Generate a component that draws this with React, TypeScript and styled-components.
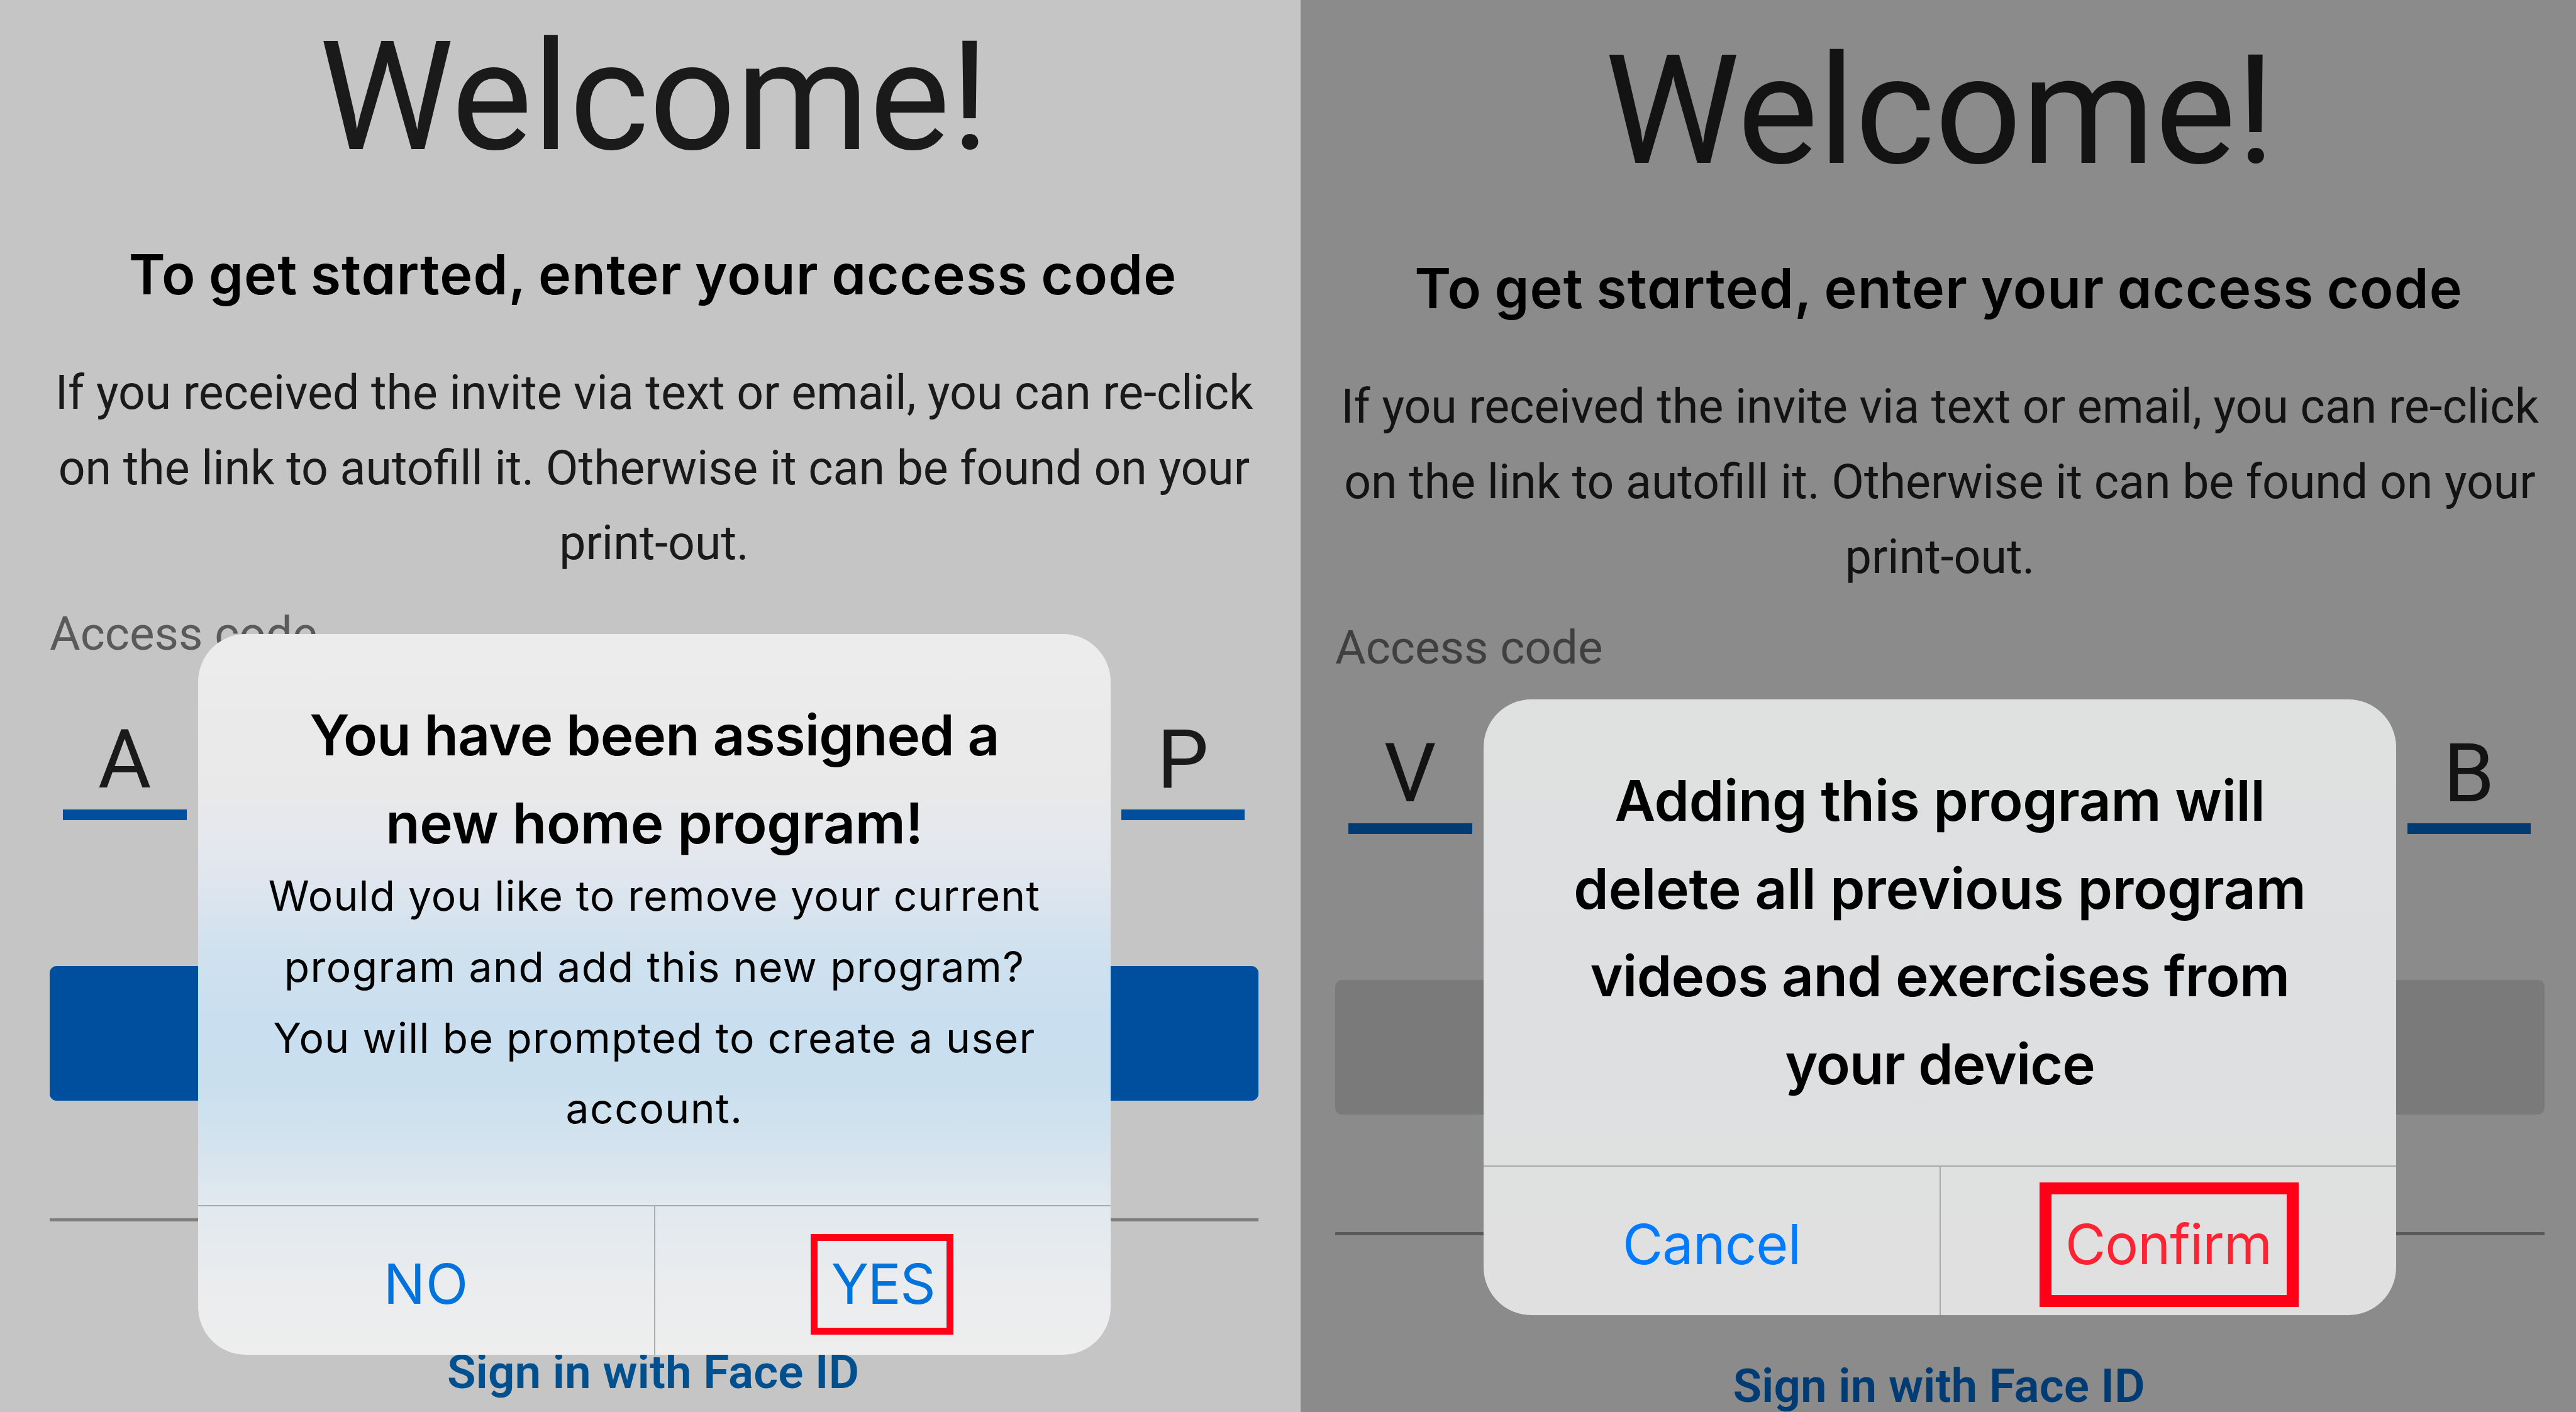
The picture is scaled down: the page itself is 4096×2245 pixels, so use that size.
import { createGlobalStyle, styled } from 'styled-components';

interface AlertLine {
  text: string;
  tracking: number;
}

interface ScreenProps {
  dimmed?: boolean;
  firstLetter: string;
  lastLetter: string;
  children: React.ReactNode;
}

const ASSIGNED_TITLE: AlertLine[] = [
  { text: 'You have been assigned a', tracking: -0.86 },
  { text: 'new home program!', tracking: -0.3 },
];

const ASSIGNED_MESSAGE: AlertLine[] = [
  { text: 'Would you like to remove your current', tracking: 1.13 },
  { text: 'program and add this new program?', tracking: 1.43 },
  { text: 'You will be prompted to create a user', tracking: 1.34 },
  { text: 'account.', tracking: 1.4 },
];

const DELETE_TITLE: AlertLine[] = [
  { text: 'Adding this program will', tracking: -0.36 },
  { text: 'delete all previous program', tracking: -0.2 },
  { text: 'videos and exercises from', tracking: -0.66 },
  { text: 'your device', tracking: -1 },
];

const WelcomeScreen = ({ dimmed = false, firstLetter, lastLetter, children }: ScreenProps) => (
  <Screen $dimmed={dimmed}>
    <Welcome>Welcome!</Welcome>
    <Heading>To get started, enter your access code</Heading>
    <Description>
      If you received the invite via text or email, you can re-click
      <br />
      on the link to autofill it. Otherwise it can be found on your
      <br />
      print-out.
    </Description>
    <CodeLabel $dimmed={dimmed}>Access code</CodeLabel>
    <CodeRow>
      <CodeCell $dimmed={dimmed}>{firstLetter}</CodeCell>
      <CodeCell $dimmed={dimmed}>{lastLetter}</CodeCell>
    </CodeRow>
    <SubmitButton $dimmed={dimmed} />
    <Divider $dimmed={dimmed} />
    <FaceIdLink $dimmed={dimmed}>Sign in with Face ID</FaceIdLink>
    {children}
  </Screen>
);

const App = () => {
  return (
    <Container>
      <GlobalStyle />
      <WelcomeScreen firstLetter="A" lastLetter="P">
        <AssignedAlert>
          <AlertBody>
            <AlertTitle>
              {ASSIGNED_TITLE.map(({ text, tracking }) => (
                <TextLine key={text} $tracking={tracking}>
                  {text}
                </TextLine>
              ))}
            </AlertTitle>
            <AlertMessage>
              {ASSIGNED_MESSAGE.map(({ text, tracking }) => (
                <TextLine key={text} $tracking={tracking}>
                  {text}
                </TextLine>
              ))}
            </AlertMessage>
          </AlertBody>
          <AlertActions $line="#a3adb3">
            <AlertButton $color="#0073dc" $tracking={1}>
              NO
            </AlertButton>
            <AlertButton $color="#0073dc" $tracking={-1.4}>
              YES
              <YesHighlight />
            </AlertButton>
          </AlertActions>
        </AssignedAlert>
      </WelcomeScreen>
      <WelcomeScreen dimmed firstLetter="V" lastLetter="B">
        <DeleteAlert>
          <AlertBody>
            <AlertTitle>
              {DELETE_TITLE.map(({ text, tracking }) => (
                <TextLine key={text} $tracking={tracking}>
                  {text}
                </TextLine>
              ))}
            </AlertTitle>
          </AlertBody>
          <AlertActions $line="#a9a9aa">
            <AlertButton $color="#007aff" $tracking={-0.9}>
              Cancel
            </AlertButton>
            <AlertButton $color="#ff2233" $tracking={-0.9}>
              Confirm
              <ConfirmHighlight />
            </AlertButton>
          </AlertActions>
        </DeleteAlert>
      </WelcomeScreen>
    </Container>
  );
};

export default App;

const GlobalStyle = createGlobalStyle`
  * {
    box-sizing: border-box;
  }

  body {
    overflow: hidden;

    margin: 0;
  }
`;

const Container = styled.main`
  display: grid;
  grid-template-columns: 2068px 2028px;

  width: 4096px;
  height: 2245px;

  font-family: Roboto, sans-serif;
`;

const Screen = styled.section<{ $dimmed: boolean }>`
  position: relative;

  overflow: hidden;
  display: flex;
  flex-direction: column;

  padding: ${({ $dimmed }) => ($dimmed ? '34px 50px 0 55px' : '12px 67px 0 79px')};

  color: ${({ $dimmed }) => ($dimmed ? '#131313' : '#1a1a1a')};

  background: ${({ $dimmed }) => ($dimmed ? '#8b8b8b' : '#c5c5c5')};
`;

const Welcome = styled.h1`
  margin: 0;

  font-size: 242px;
  font-weight: 400;
  line-height: 284px;
  text-align: center;
`;

const Heading = styled.h2`
  margin: 80px 0 0;
  padding-right: 4px;

  font-family: Inter, sans-serif;
  font-size: 88px;
  font-weight: 600;
  font-feature-settings: 'cv11';
  line-height: 120px;
  color: #000;
  text-align: center;
  letter-spacing: 1.1px;
  word-spacing: -3px;
  white-space: nowrap;
`;

const Description = styled.p`
  margin: 69px 0 0;

  font-size: 75.2px;
  line-height: 119.6px;
  text-align: center;
  white-space: nowrap;
`;

const CodeLabel = styled.span<{ $dimmed: boolean }>`
  margin-top: 39px;

  font-size: 74.7px;
  line-height: 90px;
  color: ${({ $dimmed }) => ($dimmed ? '#404040' : '#5a5a5a')};
`;

const CodeRow = styled.div`
  display: flex;
  justify-content: space-between;

  margin-top: 80px;
  padding: 0 22px 0 21px;
`;

const CodeCell = styled.span<{ $dimmed: boolean }>`
  width: 196.5px;
  height: 171px;
  border-bottom: 17px solid ${({ $dimmed }) => ($dimmed ? '#003c73' : '#004f9f')};

  font-size: 130px;
  line-height: 150px;
  text-align: center;
`;

const SubmitButton = styled.button<{ $dimmed: boolean }>`
  flex: none;

  width: 100%;
  height: 214px;
  margin-top: 232px;
  padding: 0;
  border: 0;
  border-radius: 11px;

  background: ${({ $dimmed }) => ($dimmed ? '#7a7a7a' : '#004f9f')};
`;

const Divider = styled.hr<{ $dimmed: boolean }>`
  flex: none;

  width: 100%;
  height: 5px;
  margin: 187px 0 0;
  border: 0;

  background: ${({ $dimmed }) => ($dimmed ? '#595959' : '#7f7f7f')};
`;

const FaceIdLink = styled.a<{ $dimmed: boolean }>`
  margin-top: 195px;
  padding-right: 3px;

  font-size: 74.7px;
  font-weight: 600;
  line-height: 90px;
  color: ${({ $dimmed }) => ($dimmed ? '#003c73' : '#00508f')};
  text-align: center;
`;

const Alert = styled.div`
  position: absolute;

  overflow: hidden;
  display: flex;
  flex-direction: column;

  width: 1451px;
  border-radius: 76px;

  font-family: Inter, sans-serif;
  color: #000;
`;

const AssignedAlert = styled(Alert)`
  top: 1008px;
  left: 315px;

  height: 1146px;

  background: linear-gradient(
    #ececec 0%,
    #e9e9ea 22%,
    #e2e7ee 32%,
    #d0e1ee 44%,
    #c9dff0 53%,
    #c9dfee 62%,
    #d4e3ee 71%,
    #e1e8ef 79%,
    #e4eaee 83%,
    #ebecee 91%,
    #eeeeee 100%
  );
`;

const DeleteAlert = styled(Alert)`
  top: 1112px;
  left: 291px;

  height: 979px;

  background: linear-gradient(#dfe1e1, #dedfe0 50%, #e0e0e0);
`;

const AlertBody = styled.div`
  flex: 1;

  padding-top: 91px;

  text-align: center;
  white-space: nowrap;
`;

const AlertTitle = styled.h3`
  margin: 0;

  font-size: 89px;
  font-weight: 600;
  line-height: 139.6px;
`;

const TextLine = styled.span<{ $tracking: number }>`
  display: block;

  letter-spacing: ${({ $tracking }) => $tracking}px;
`;

const AlertMessage = styled.p`
  margin: -10px 0 0;

  font-size: 66px;
  line-height: 112.7px;
`;

const AlertActions = styled.div<{ $line: string }>`
  display: grid;
  grid-template-columns: 725px 726px;

  height: 238px;
  border-top: 2px solid ${({ $line }) => $line};

  button + button {
    border-left: 2px solid ${({ $line }) => $line};
  }
`;

const AlertButton = styled.button<{ $color: string; $tracking: number }>`
  position: relative;

  padding: 10px 0 0;
  border: 0;

  font-family: inherit;
  font-size: 88px;
  color: ${({ $color }) => $color};
  letter-spacing: ${({ $tracking }) => $tracking}px;

  background: none;
`;

const Highlight = styled.span`
  position: absolute;

  border-style: solid;
  border-color: #ff0019;
`;

const YesHighlight = styled(Highlight)`
  top: 44px;
  left: 247px;

  width: 227px;
  height: 160px;
  border-width: 11px;
`;

const ConfirmHighlight = styled(Highlight)`
  top: 25px;
  left: 157px;

  width: 412px;
  height: 198px;
  border-width: 19px;
`;
